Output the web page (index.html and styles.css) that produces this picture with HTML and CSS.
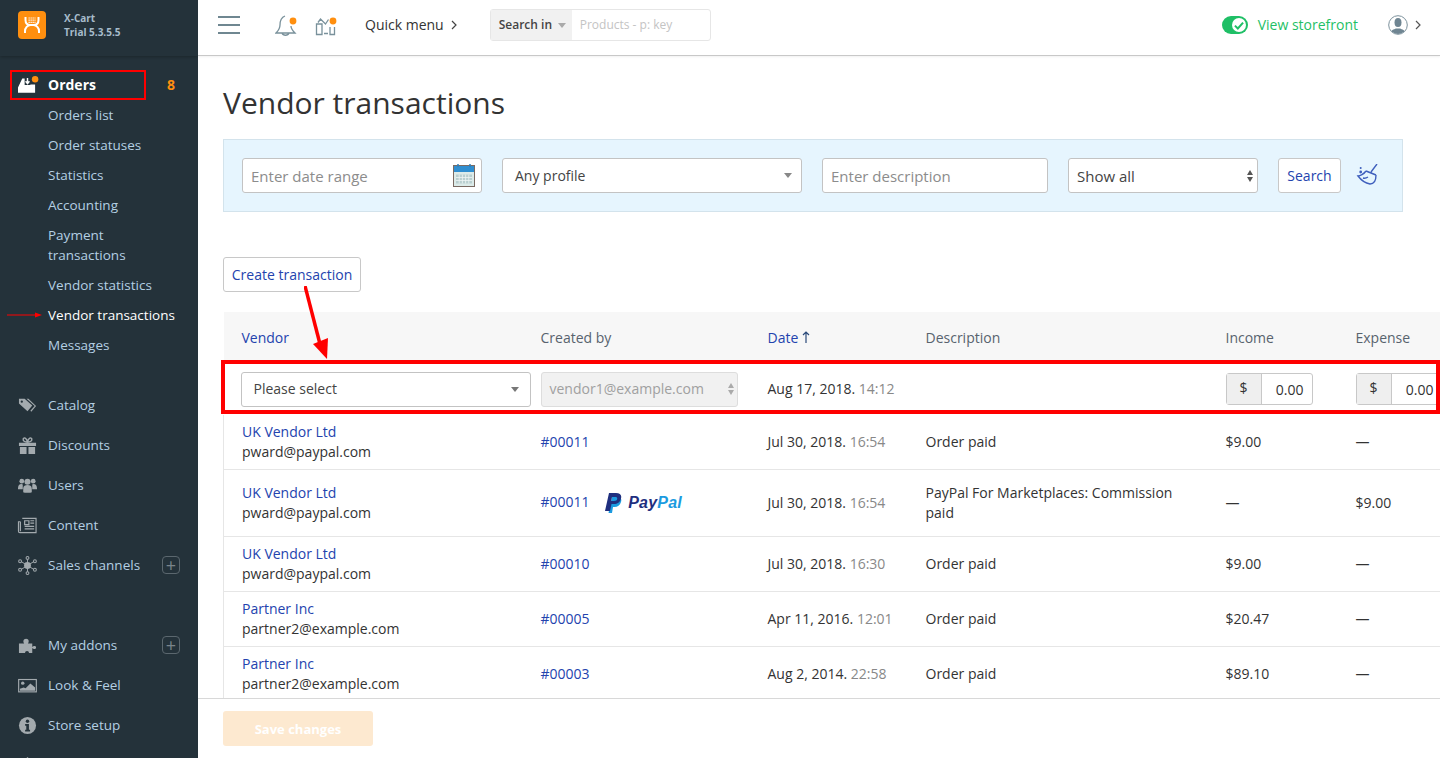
FILE: index.html
```html
<!DOCTYPE html>
<html>
<head>
  <title>Vendor transactions</title>
  <link rel="stylesheet" href="styles.css">
</head>
<body>

  <div class="layout">
    <aside class="sidebar">
      <div class="brand">
        <svg class="brand-logo" viewBox="0 0 28 28">
          <rect width="28" height="28" rx="4" fill="#ff8f0f"/>
          <path d="M7.500 6v3c0 3 2 5 5 5h3c3 0 5-2 5-5V6M12.500 14c-3 0-5.500 3-5.500 6v2M15.500 14c3 0 5.500 3 5.500 6v2" fill="none" stroke="#fff" stroke-width="2"/>
          <path d="M10.500 7h7M10.500 9.200h7M10.500 11.400h7" stroke="#fff" stroke-width="1.200" stroke-dasharray="1.300 .7"/>
        </svg>
        <div class="brand-text">X-Cart<br>Trial 5.3.5.5</div>
      </div>

      <nav class="nav">
        <div class="nav-item nav-item-active">
          <svg class="nav-icon" viewBox="0 0 20 20">
            <path d="M0 17.500V12L4.500 2.500H7v7h6V9h5v8.500z" fill="#fff"/>
            <path d="M10 2v5.500M8 5.500L10 8l2-2.500" fill="none" stroke="#fff" stroke-width="1.500"/>
            <circle cx="18" cy="3.500" r="3.400" fill="#ff8f0f"/>
          </svg>
          <span>Orders</span>
          <span class="nav-count">8</span>
        </div>
        <a class="nav-sub">Orders list</a>
        <a class="nav-sub">Order statuses</a>
        <a class="nav-sub">Statistics</a>
        <a class="nav-sub">Accounting</a>
        <a class="nav-sub nav-sub-wrap">Payment<br>transactions</a>
        <a class="nav-sub">Vendor statistics</a>
        <a class="nav-sub nav-sub-current">Vendor transactions</a>
        <a class="nav-sub">Messages</a>

        <div class="nav-group">
          <div class="nav-item">
            <svg class="nav-icon" viewBox="0 0 20 20"><path d="M1 3h6l8 7-5 6-9-8zM9 3h2l8 7.500-5 6-1-1 4.500-5z" fill="#a3aaae"/><circle cx="4" cy="6" r="1.200" fill="#24323a"/></svg>
            <span>Catalog</span>
          </div>
          <div class="nav-item">
            <svg class="nav-icon" viewBox="0 0 20 20"><path d="M1 7h18v3.500H1zM2 11.500h7V19H2zM11 11.500h7V19h-7z" fill="#a3aaae"/><path d="M10 6.500C7 6.500 5 5 5.500 3 6 1.500 9 1.500 10 6.500zM10 6.500c3 0 5-1.500 4.500-3.500C14 1.500 11 1.500 10 6.500z" fill="none" stroke="#a3aaae" stroke-width="1.500"/></svg>
            <span>Discounts</span>
          </div>
          <div class="nav-item">
            <svg class="nav-icon" viewBox="0 0 20 20"><circle cx="4" cy="5.500" r="2.500" fill="#a3aaae"/><circle cx="16" cy="5.500" r="2.500" fill="#a3aaae"/><circle cx="10" cy="6" r="3.200" fill="#a3aaae"/><path d="M0 13c0-3 1.500-4.500 3.500-4.500S5 9.500 5 9.500V14H0zM20 13c0-3-1.500-4.500-3.500-4.500S15 9.500 15 9.500V14h5zM5.500 17v-4c0-2.500 2-3.500 4.500-3.500s4.500 1 4.500 3.500v4c-1 .8-8 .8-9 0z" fill="#a3aaae"/></svg>
            <span>Users</span>
          </div>
          <div class="nav-item">
            <svg class="nav-icon" viewBox="0 0 20 20"><path d="M4.500 2.500h14.500v15H2c-1 0-1.500-.5-1.500-1.500V6h2" fill="none" stroke="#a3aaae" stroke-width="1.200"/><path d="M2.500 6v10M7 5h4.500v4H7zM13 5h4M13 7.500h4M7 11h10M7 13.500h10" fill="none" stroke="#a3aaae" stroke-width="1.300"/></svg>
            <span>Content</span>
          </div>
          <div class="nav-item">
            <svg class="nav-icon" viewBox="0 0 20 20"><path d="M2 5l16 10M18 5L2 15M10 1v18" stroke="#a3aaae"/><circle cx="10" cy="10" r="3.600" fill="#a3aaae"/><g fill="#24323a" stroke="#a3aaae" stroke-width="1.100"><circle cx="10" cy="2" r="1.500"/><circle cx="10" cy="18" r="1.500"/><circle cx="2.200" cy="5.500" r="1.500"/><circle cx="17.800" cy="5.500" r="1.500"/><circle cx="2.200" cy="14.500" r="1.500"/><circle cx="17.800" cy="14.500" r="1.500"/></g></svg>
            <span>Sales channels</span>
            <span class="nav-plus">+</span>
          </div>
        </div>

        <div class="nav-group">
          <div class="nav-item">
            <svg class="nav-icon" viewBox="0 0 20 20"><path d="M1 8h5.500c-1.500-2-1-5 2-5s3.500 3 2 5H15v3.500c1-1.500 4-1.500 4 .5s-3 2-4 .5V18h-3.500c.5-3-4.500-3-4 0H1z" fill="#a3aaae"/></svg>
            <span>My addons</span>
            <span class="nav-plus">+</span>
          </div>
          <div class="nav-item">
            <svg class="nav-icon" viewBox="0 0 20 20"><rect x=".7" y="3.700" width="18.600" height="13" fill="none" stroke="#a3aaae" stroke-width="1.200"/><circle cx="5" cy="7.500" r="1.800" fill="#a3aaae"/><path d="M2 15.500v-2l4-1.500 2 1 5-5 5 4v3.500z" fill="#a3aaae"/></svg>
            <span>Look &amp; Feel</span>
          </div>
          <div class="nav-item">
            <svg class="nav-icon" viewBox="0 0 20 20"><circle cx="10" cy="10" r="9" fill="#a3aaae"/><circle cx="10" cy="5.500" r="1.800" fill="#24323a"/><path d="M7.500 8.500h4v6h1.200v1.700H7.500v-1.700h1.200v-4.300H7.500z" fill="#24323a"/></svg>
            <span>Store setup</span>
          </div>
          <div class="nav-item">
            <svg class="nav-icon" viewBox="0 0 20 20"><path d="M10 1l3 3v6H7V4z" fill="#a3aaae"/></svg>
          </div>
        </div>
      </nav>

      <svg class="side-arrow" viewBox="0 0 36 8"><path d="M0 4h30" stroke="#f00"/><path d="M28 1.500L35 4l-7 2.500z" fill="#f00"/></svg>
    </aside>

    <div class="main">
      <header class="topbar">
        <div class="burger"><i></i><i></i><i></i></div>

        <div class="top-icon top-icon-bell">
          <svg viewBox="0 0 24 24" width="24" height="24"><path d="M10 3C6 4.500 5 8 5 12c0 4-2 6-4 8h19c-2-2-4-4-4-7M7 20c1 3 6 3 7 0" fill="none" stroke="#79919b" stroke-width="1.300"/><circle cx="18" cy="8" r="3.400" fill="#ff8f0f"/></svg>
        </div>
        <div class="top-icon top-icon-store">
          <svg viewBox="0 0 24 24" width="24" height="24"><path d="M2.500 21.500V11h5.500v10.500zM16 14v7.500h4.500V14M10 20.500h4M4 9.500L6.500 6l5 5 3-4.500" fill="none" stroke="#79919b" stroke-width="1.300"/><circle cx="19" cy="8" r="3.400" fill="#ff8f0f"/></svg>
        </div>

        <a class="quick-menu">Quick menu<svg class="chevron" viewBox="0 0 6 10"><path d="M1 1l4 4-4 4" fill="none" stroke="#444" stroke-width="1.200"/></svg></a>

        <div class="top-search">
          <div class="top-search-label">Search in <b class="caret"></b></div>
          <div class="top-search-input">Products - p: key</div>
        </div>

        <div class="storefront">
          <span class="toggle"><svg viewBox="0 0 12 12"><path d="M2.500 6.500L5 9l4.500-5" fill="none" stroke="#1fbf66" stroke-width="1.700"/></svg></span>
          <a>View storefront</a>
        </div>

        <div class="account">
          <svg viewBox="0 0 20 20" width="20" height="20"><defs><clipPath id="avatarClip"><circle cx="10" cy="10" r="9"/></clipPath></defs><circle cx="10" cy="10" r="9.300" fill="#fff" stroke="#7c919c"/><g clip-path="url(#avatarClip)" fill="#6f8592"><ellipse cx="10" cy="7.500" rx="3.500" ry="4.500"/><path d="M2 20c0-5 4-5.500 6-6.500h4c2 1 6 1.500 6 6.500z"/></g></svg>
          <svg class="chevron" viewBox="0 0 6 10"><path d="M1 1l4 4-4 4" fill="none" stroke="#555" stroke-width="1.200"/></svg>
        </div>
      </header>

      <div class="content">
        <h1>Vendor transactions</h1>

        <div class="filters">
          <div class="field field-date">
            <span class="placeholder">Enter date range</span>
            <svg class="calendar-icon" viewBox="0 0 22 23">
              <rect x=".5" y="1.500" width="21" height="21" fill="#dcebe9" stroke="#7a6a62"/>
              <rect x="1" y="2" width="20" height="6" fill="#2f8ed0"/>
              <path d="M5 0v3M17 0v3" stroke="#2f7fb8" stroke-width="1.500"/>
              <rect x="3" y="10.500" width="16" height="9" fill="#b9cfd0"/>
              <path d="M3 13.500h16M3 16.500h16M6.200 10.500v9M9.400 10.500v9M12.600 10.500v9M15.800 10.500v9" stroke="#eef5f4" stroke-width=".8"/>
            </svg>
          </div>
          <div class="field field-profile">
            <span>Any profile</span>
            <b class="caret"></b>
          </div>
          <div class="field field-desc"><span class="placeholder">Enter description</span></div>
          <div class="field field-show">
            <span>Show all</span>
            <span class="updown"><b></b><b></b></span>
          </div>
          <button class="btn btn-search">Search</button>
          <svg class="broom" viewBox="0 0 24 24"><path d="M21 0l-6 8M10 7l10 4M10 7C8 10 4 12 2 12c3 4 6 7 12 8 4 0 6-4 6-9M7 14c2 .5 3.500 0 5-1" fill="none" stroke="#3f5fbd" stroke-width="1.400"/><circle cx="4.700" cy="4" r="1" fill="#3f5fbd"/><circle cx="4.700" cy="8" r="1.400" fill="#3f5fbd"/></svg>
        </div>

        <button class="btn btn-create">Create transaction</button>

        <div class="table-wrap">
          <table class="transactions">
            <colgroup>
              <col class="col-vendor"><col class="col-created"><col class="col-date">
              <col class="col-desc"><col class="col-income"><col class="col-expense">
            </colgroup>
            <thead>
              <tr>
                <th><a>Vendor</a></th>
                <th>Created by</th>
                <th><a>Date</a> <svg class="sort-icon" viewBox="0 0 8 12"><path d="M4 12V1M1 4l3-3 3 3" fill="none" stroke="#2b4a7a" stroke-width="1.200"/></svg></th>
                <th>Description</th>
                <th>Income</th>
                <th>Expense</th>
              </tr>
            </thead>
            <tbody>
              <tr class="row-new">
                <td>
                  <div class="field field-vendor"><span>Please select</span><b class="caret"></b></div>
                </td>
                <td>
                  <div class="field field-creator"><span>vendor1@example.com</span><span class="updown"><b></b><b></b></span></div>
                </td>
                <td>Aug 17, 2018. <span class="time">14:12</span></td>
                <td></td>
                <td><div class="money"><span class="money-sign">$</span><span class="money-value">0.00</span></div></td>
                <td><div class="money"><span class="money-sign">$</span><span class="money-value">0.00</span></div></td>
              </tr>
              <tr class="row-short">
                <td><a>UK Vendor Ltd</a><br>pward@paypal.com</td>
                <td><a>#00011</a></td>
                <td>Jul 30, 2018. <span class="time">16:54</span></td>
                <td>Order paid</td>
                <td>$9.00</td>
                <td>—</td>
              </tr>
              <tr class="row-tall">
                <td><a>UK Vendor Ltd</a><br>pward@paypal.com</td>
                <td>
                  <a>#00011</a>
                  <span class="paypal">
                    <svg viewBox="0 0 18 20" width="18" height="20"><path d="M7 4h5c3.500 0 5 1.500 4 5-1 3.500-3.500 5-6.500 5H8L7 20H3.500z" fill="#1b9be0"/><path fill-rule="evenodd" d="M4 0h7c4 0 6 2 5 5.500-1 4-3.500 5.500-7 5.500H6.500L5 18H0zM7 4L6.200 8H9c2 0 3-1 3.200-2.300C12.400 4.500 11.500 4 10 4z" fill="#1f2f7f"/></svg>
                    <span class="paypal-pay">Pay</span><span class="paypal-pal">Pal</span>
                  </span>
                </td>
                <td>Jul 30, 2018. <span class="time">16:54</span></td>
                <td>PayPal For Marketplaces: Commission<br>paid</td>
                <td>—</td>
                <td>$9.00</td>
              </tr>
              <tr>
                <td><a>UK Vendor Ltd</a><br>pward@paypal.com</td>
                <td><a>#00010</a></td>
                <td>Jul 30, 2018. <span class="time">16:30</span></td>
                <td>Order paid</td>
                <td>$9.00</td>
                <td>—</td>
              </tr>
              <tr>
                <td><a>Partner Inc</a><br>partner2@example.com</td>
                <td><a>#00005</a></td>
                <td>Apr 11, 2016. <span class="time">12:01</span></td>
                <td>Order paid</td>
                <td>$20.47</td>
                <td>—</td>
              </tr>
              <tr>
                <td><a>Partner Inc</a><br>partner2@example.com</td>
                <td><a>#00003</a></td>
                <td>Aug 2, 2014. <span class="time">22:58</span></td>
                <td>Order paid</td>
                <td>$89.10</td>
                <td>—</td>
              </tr>
            </tbody>
          </table>

          <!-- red annotations on top of the table -->
          <div class="mark-row"></div>
          <svg class="mark-arrow" viewBox="0 0 30 76"><path d="M1 0l15 58" stroke="#f00" stroke-width="3.500"/><path d="M9 58l15-6-1 21z" fill="#f00"/></svg>
        </div>
      </div>

      <footer class="savebar">
        <button class="btn-save">Save changes</button>
      </footer>
    </div>
  </div>

</body>
</html>
```

FILE: styles.css
```css
html, body {
  height: 100%;
}

body {
  margin: 0;
  font-family: 'Open Sans', sans-serif;
  font-size: 14px;
  line-height: 20px;
  color: #333;
  background: #fff;
  overflow: hidden;
}

a {
  color: #2343ae;
  text-decoration: none;
}

.layout {
  display: flex;
  height: 758px;
  overflow: hidden;
}

/* sidebar */
.sidebar {
  position: relative;
  flex: 0 0 198px;
  background: #24323a;
  color: #b4cfe3;
  font-size: 13.5px;
  overflow: hidden;
}

.brand {
  display: flex;
  align-items: center;
  height: 56px;
  padding: 0 0 6px 18px;
  box-sizing: border-box;
  box-shadow: 0 1px 3px rgba(0, 0, 0, 0.25);
}

.brand-logo {
  width: 28px;
  height: 28px;
  margin-right: 18px;
}

.brand-text {
  font-size: 10px;
  line-height: 14px;
  font-weight: 700;
  color: #a7bccb;
}

.nav {
  padding-top: 14px;
}

.nav-item {
  display: flex;
  align-items: center;
  height: 40px;
  padding: 0 18px;
}

.nav-item-active {
  position: relative;
  height: 30px;
  color: #fff;
  font-size: 14px;
  font-weight: 700;
}

/* red annotation box round the orders row */
.nav-item-active::after {
  content: "";
  position: absolute;
  left: 10px;
  top: 0;
  width: 136px;
  height: 30px;
  border: 2px solid #f00;
  box-sizing: border-box;
}

.nav-icon {
  flex: none;
  width: 19px;
  height: 19px;
  margin-right: 11px;
  overflow: visible;
}

.nav-count {
  margin-left: auto;
  margin-right: 5px;
  color: #ff8f0f;
  font-weight: 700;
}

.nav-sub {
  display: block;
  height: 30px;
  padding-left: 48px;
  line-height: 30px;
  color: #b4cfe3;
}

.nav-sub-wrap {
  height: 50px;
  padding-top: 5px;
  box-sizing: border-box;
  line-height: 20px;
}

.nav-sub-current {
  color: #fff;
}

.nav-group {
  margin-top: 25px;
}

.nav-group + .nav-group {
  margin-top: 40px;
}

.nav-plus {
  display: flex;
  align-items: center;
  justify-content: center;
  width: 16px;
  height: 16px;
  margin-left: auto;
  border: 1px solid #5b676e;
  border-radius: 4px;
  color: #7a858b;
  font-size: 18px;
  line-height: 16px;
}

.side-arrow {
  position: absolute;
  left: 7px;
  top: 311px;
  width: 36px;
  height: 8px;
}

/* main column */
.main {
  flex: 1;
  min-width: 0;
  display: flex;
  flex-direction: column;
}

.topbar {
  flex: none;
  display: flex;
  align-items: center;
  height: 56px;
  box-sizing: border-box;
  padding: 0 0 5px 20px;
  border-bottom: 1px solid #c8c8c8;
  box-shadow: 0 1px 2px rgba(0, 0, 0, 0.06);
}

.burger {
  width: 22px;
}

.burger i {
  display: block;
  height: 2px;
  margin-bottom: 6px;
  background: #6f8791;
}

.burger i:last-child {
  margin-bottom: 0;
}

.top-icon {
  display: flex;
  width: 24px;
  height: 24px;
}

.top-icon-bell {
  margin-left: 35px;
}

.top-icon-store {
  margin-left: 15px;
}

.quick-menu {
  display: flex;
  align-items: center;
  margin-left: 27px;
  color: #333;
}

.chevron {
  width: 6px;
  height: 10px;
  margin-left: 7px;
}

.top-search {
  display: flex;
  width: 221px;
  height: 32px;
  margin-left: 33px;
  box-sizing: border-box;
  border: 1px solid #e6e6e6;
  border-radius: 3px;
  font-size: 12px;
}

.top-search-label {
  display: flex;
  align-items: center;
  width: 81px;
  padding-left: 8px;
  box-sizing: border-box;
  background: #f1f1f1;
  color: #444;
  font-weight: 600;
}

.top-search-label .caret {
  margin-left: 6px;
  border-top-color: #aaa;
}

.top-search-input {
  padding-left: 8px;
  line-height: 30px;
  color: #c4c4c4;
}

.caret {
  display: block;
  width: 0;
  height: 0;
  border-left: 4px solid transparent;
  border-right: 4px solid transparent;
  border-top: 5px solid #777;
}

.storefront {
  display: flex;
  align-items: center;
  margin-left: auto;
}

.storefront a {
  margin-left: 10px;
  color: #1fbf66;
}

.toggle {
  display: flex;
  justify-content: flex-end;
  align-items: center;
  width: 26px;
  height: 18px;
  box-sizing: border-box;
  padding-right: 2px;
  border-radius: 9px;
  background: #1fbf66;
}

.toggle svg {
  width: 14px;
  height: 14px;
  background: #fff;
  border-radius: 50%;
}

.account {
  display: flex;
  align-items: center;
  margin-left: 30px;
  margin-right: 19px;
}

.account .chevron {
  margin-left: 7px;
}

/* page content */
.content {
  flex: 1;
  min-height: 0;
  overflow: hidden;
  padding-left: 25px;
}

h1 {
  margin: 26px 0 15px;
  font-size: 30px;
  line-height: 42px;
  font-weight: 400;
  color: #333;
}

.filters {
  display: flex;
  align-items: center;
  width: 1180px;
  height: 73px;
  box-sizing: border-box;
  padding-left: 18px;
  background: #e6f5fe;
  border: 1px solid #d3e3ec;
}

.field {
  display: flex;
  align-items: center;
  justify-content: space-between;
  height: 35px;
  box-sizing: border-box;
  background: #fff;
  border: 1px solid #c3c3c3;
  border-radius: 3px;
  color: #444;
}

.placeholder {
  color: #8c8c8c;
  font-size: 15px;
}

.field-date {
  width: 240px;
  padding: 0 6px 0 8px;
}

.calendar-icon {
  width: 22px;
  height: 23px;
}

.field-profile {
  width: 300px;
  margin-left: 20px;
  padding: 0 9px 0 12px;
}

.field-profile .caret {
  border-top-color: #888;
}

.field-desc {
  width: 226px;
  margin-left: 20px;
  padding: 0 8px;
}

.field-show {
  width: 190px;
  margin-left: 20px;
  padding: 0 4px 0 8px;
  font-size: 15px;
}

.updown b {
  display: block;
  width: 0;
  height: 0;
  border-left: 3.500px solid transparent;
  border-right: 3.500px solid transparent;
  border-bottom: 5px solid #555;
}

.updown b + b {
  margin-top: 2px;
  border-bottom: 0;
  border-top: 5px solid #555;
}

.btn {
  height: 35px;
  padding: 0;
  background: #fff;
  border: 1px solid #c8c8c8;
  border-radius: 3px;
  font-family: inherit;
  font-size: 14px;
  color: #2343ae;
}

.btn-search {
  width: 63px;
  margin-left: 20px;
}

.broom {
  width: 24px;
  height: 24px;
  margin-left: 15px;
}

.btn-create {
  display: block;
  width: 138px;
  margin-top: 45px;
}

/* table */
.table-wrap {
  position: relative;
  margin-top: 20px;
}

.transactions {
  table-layout: fixed;
  width: 1262px;
  border-collapse: collapse;
}

.col-vendor { width: 317px; }
.col-created { width: 227px; }
.col-date { width: 158px; }
.col-desc { width: 300px; }
.col-income { width: 130px; }
.col-expense { width: 130px; }

.transactions th {
  height: 51px;
  padding: 0;
  background: #f7f7f7;
  text-align: left;
  font-weight: 400;
  color: #58636e;
}

.transactions th:first-child {
  padding-left: 18px;
}

.sort-icon {
  width: 8px;
  height: 12px;
}

.transactions td {
  height: 55px;
  padding: 0;
  border-bottom: 1px solid #e6e6e6;
  box-sizing: border-box;
}

.transactions td:first-child {
  padding-left: 18px;
  border-left: 1px solid #e6e6e6;
}

.row-new td {
  height: 52px;
  border-bottom: 0;
}

.transactions .row-new td:first-child {
  padding-left: 17px;
  border-left: 0;
}

.transactions .row-short td {
  height: 54px;
}

.transactions .row-tall td {
  height: 67px;
}

.time {
  color: #888;
}

.field-vendor {
  width: 290px;
  padding: 0 11px 0 12px;
  font-size: 14px;
}

.field-creator {
  width: 197px;
  padding: 0 3px 0 8px;
  background: #f1f1f1;
  border-color: #ddd;
  color: #a0a0a0;
}

.field-creator .updown b {
  border-bottom-color: #aaa;
}

.field-creator .updown b + b {
  border-top-color: #aaa;
}

.money {
  display: flex;
  width: 87px;
  height: 32px;
  box-sizing: border-box;
  border: 1px solid #c8c8c8;
  border-radius: 3px;
}

.money-sign {
  width: 34px;
  line-height: 28px;
  text-align: center;
  background: #efefef;
  border-right: 1px solid #c8c8c8;
}

.money-value {
  flex: 1;
  padding-right: 8px;
  line-height: 32px;
  text-align: right;
}

.paypal {
  display: inline-flex;
  align-items: center;
  margin-left: 12px;
  vertical-align: middle;
  font-family: 'Liberation Sans', sans-serif;
  font-size: 16px;
  font-weight: 700;
  font-style: italic;
  letter-spacing: 0.2px;
}

.paypal svg {
  margin-right: 5px;
}

.paypal-pay {
  color: #1f2f7f;
}

.paypal-pal {
  color: #1b9be0;
}

.mark-row {
  position: absolute;
  left: -2px;
  top: 48px;
  width: 1219px;
  height: 54px;
  box-sizing: border-box;
  border: 4px solid #f00;
}

.mark-arrow {
  position: absolute;
  left: 81px;
  top: -26px;
  width: 30px;
  height: 76px;
}

/* bottom bar */
.savebar {
  flex: none;
  height: 60px;
  box-sizing: border-box;
  padding: 12px 0 0 25px;
  border-top: 1px solid #d8d8d8;
  background: #fff;
}

.btn-save {
  width: 150px;
  height: 35px;
  padding: 0;
  border: 0;
  border-radius: 3px;
  background: #fde9d0;
  color: #fff;
  font-family: inherit;
  font-size: 13px;
  font-weight: 700;
}
```
